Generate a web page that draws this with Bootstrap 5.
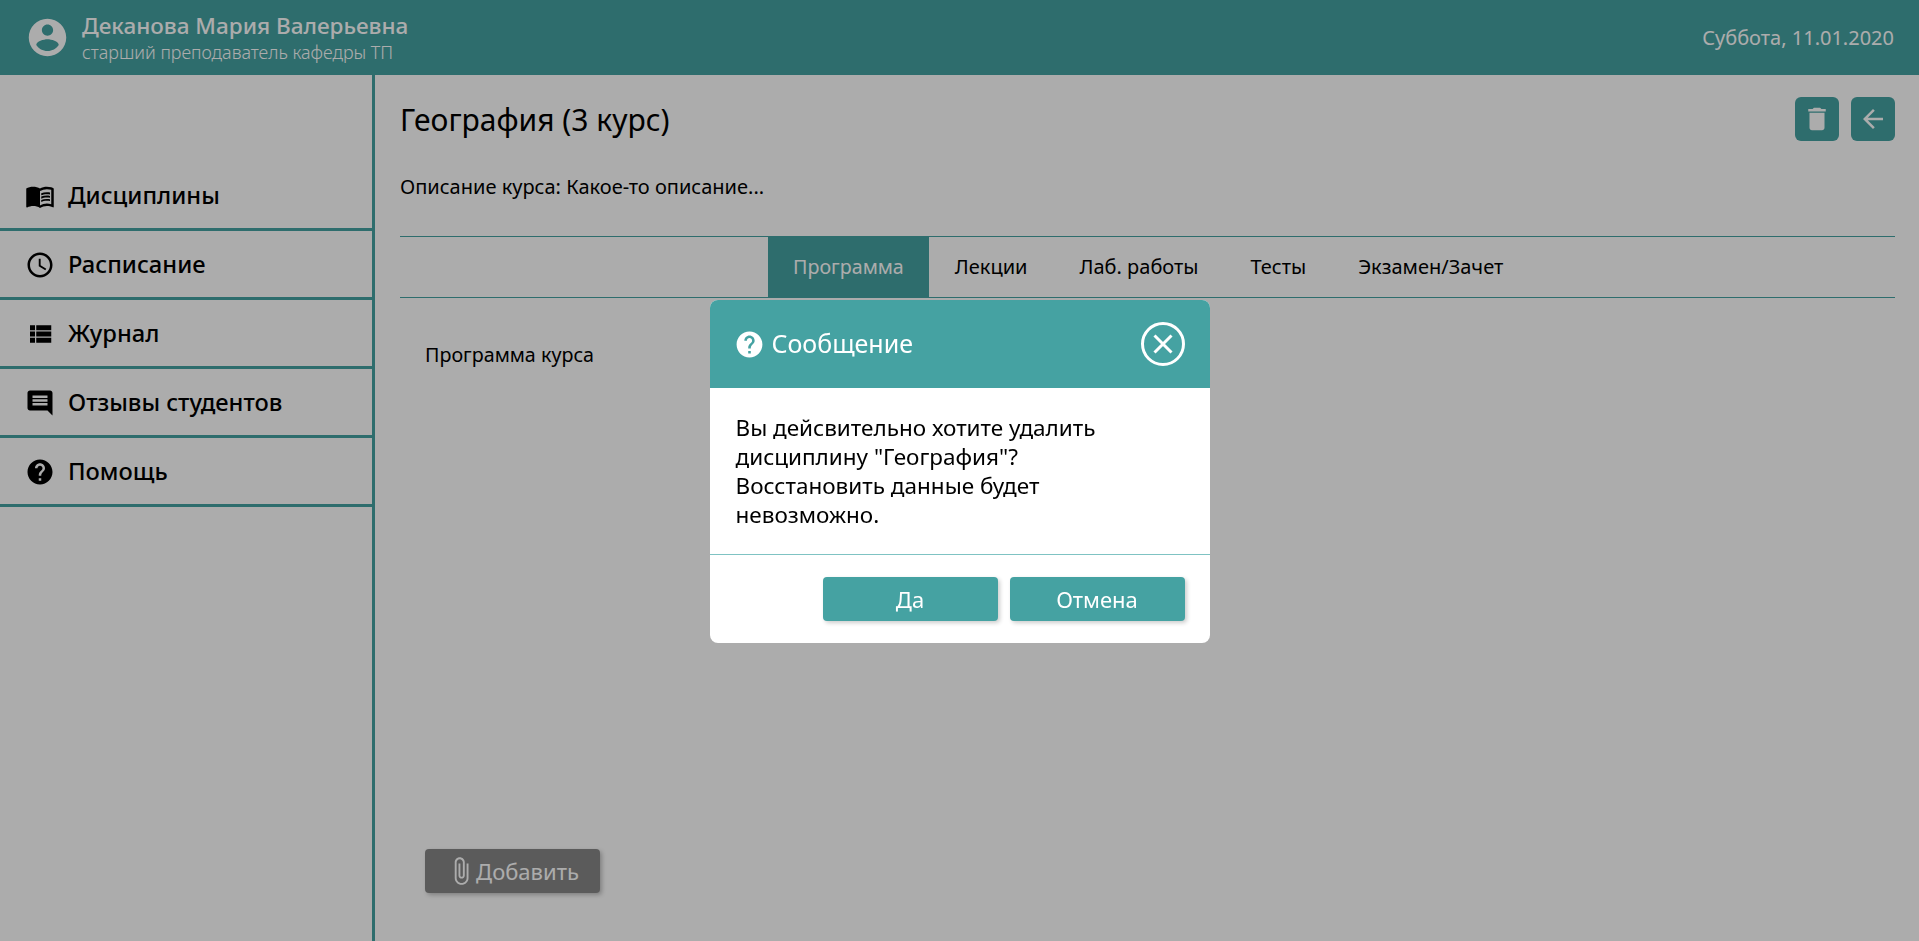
<!DOCTYPE html>
<html lang="ru">
<head>
    <meta charset="UTF-8">
    <title>География (3 курс)</title>
    <link href="https://cdn.jsdelivr.net/npm/bootstrap@5.3.0/dist/css/bootstrap.min.css" rel="stylesheet">
    <style>
        body { font-family: "Noto Sans", "Open Sans", sans-serif; color: #000; background: #fff; overflow: hidden; }
        .top-bar { height: 75px; background: #45a2a2; color: #fff; padding: 0 25px; }
        .top-bar > svg { margin-right: 12px; }
        .user-name { font-size: 22.5px; font-weight: 500; line-height: 28px; }
        .user-role { font-size: 17.9px; font-weight: 300; line-height: 24px; }
        .top-date { font-size: 20px; }
        .side-col { width: 375px; border-right: 3px solid #45a2a2; padding-top: 87px; }
        .side-link { height: 69px; border-bottom: 3px solid #45a2a2; padding: 2px 0 0 26px; color: #000; font-size: 23.7px; font-weight: 500; text-decoration: none; }
        .side-link svg { width: 30px; height: 30px; margin-left: -1px; margin-right: 13px; }
        .main-col { padding: 22px 24px 48px 25px; }
        .page-title { font-size: 30px; font-weight: 400; line-height: 42px; padding-top: 2px; margin: 0; }
        .square-btn { width: 44px; height: 44px; background: #45a2a2; border-radius: 6px; border: 0; padding: 0; color: #fff; }
        .square-btn svg { width: 30px; height: 30px; }
        .btn-pair { gap: 12px; }
        .descr { font-size: 20px; margin: 33px 0 0; line-height: 26px; height: 62px; }
        .tab-row { height: 62px; border-top: 1px solid #45a2a2; border-bottom: 1px solid #45a2a2; padding-left: 368px; }
        .tab-row a { height: 60px; padding: 0 26px; color: #000; font-size: 20px; text-decoration: none; }
        .tab-row a.now { background: #45a2a2; color: #fff; padding: 0 25px; font-size: 19.7px; }
        .tab-text { font-size: 19.7px; margin: 44px 0 0 25px; line-height: 26px; }
        .add-btn { width: 175px; height: 44px; background: #888; color: #fff; font-size: 22px; border: 0; border-radius: 4px; box-shadow: 2px 2px 4px rgba(0,0,0,.25); margin-left: 25px; }
        .add-btn svg { width: 30px; height: 30px; }
        .shade { position: fixed; inset: 0; background: rgba(0,0,0,.325); z-index: 1040; }
        .msg-dialog { margin-top: 29px; }
        .msg-box { border: 0; border-radius: 8px; overflow: hidden; }
        .msg-head { height: 88px; background: #45a2a2; color: #fff; border: 0; border-radius: 0; padding: 0 25px 0 24px; }
        .msg-title { font-size: 25px; font-weight: 400; }
        .msg-title svg { width: 31px; height: 31px; margin-right: 7px; }
        .msg-close { width: 44px; height: 44px; border: 3px solid #fff; border-radius: 50%; background: none; padding: 0; }
        .msg-close svg { width: 22px; height: 22px; }
        .msg-body { flex: none; padding: 25px 90px 0 26px; height: 167px; font-size: 22.5px; line-height: 29px; border-bottom: 1px solid #7fc3c3; }
        .msg-foot { height: 88px; padding: 22px 25px 0 0; border: 0; gap: 12px; }
        .msg-btn { width: 175px; height: 44px; background: #45a2a2; color: #fff; font-size: 22px; border: 0; border-radius: 4px; box-shadow: 2px 2px 4px rgba(0,0,0,.2); padding: 0; margin: 0; }
    </style>
</head>
<body>
<div class="d-flex flex-column vh-100">
    <div class="top-bar d-flex align-items-center">
        <svg width="45" height="45" viewBox="0 0 24 24" fill="currentColor" class="flex-shrink-0"><path d="M12 2C6.48 2 2 6.48 2 12s4.48 10 10 10 10-4.48 10-10S17.52 2 12 2zm0 3c1.66 0 3 1.34 3 3s-1.34 3-3 3-3-1.34-3-3 1.34-3 3-3zm0 14.2c-2.5 0-4.71-1.28-6-3.22.03-1.99 4-3.08 6-3.08 1.99 0 5.97 1.09 6 3.08-1.29 1.94-3.5 3.22-6 3.22z"/></svg>
        <div class="flex-grow-1">
            <div class="user-name">Деканова Мария Валерьевна</div>
            <div class="user-role">старший преподаватель кафедры ТП</div>
        </div>
        <div class="top-date">Суббота, 11.01.2020</div>
    </div>
    <div class="d-flex flex-grow-1">
        <nav class="side-col flex-shrink-0">
            <a href="#" class="side-link d-flex align-items-center">
                <svg viewBox="0 0 24 24" fill="currentColor"><path d="M21 5c-1.11-.35-2.33-.5-3.5-.5-1.95 0-4.05.4-5.5 1.5-1.45-1.1-3.55-1.5-5.5-1.5S2.45 4.9 1 6v14.65c0 .25.25.5.5.5.1 0 .15-.05.25-.05C3.1 20.45 5.05 20 6.5 20c1.95 0 4.05.4 5.5 1.5 1.35-.85 3.8-1.5 5.5-1.5 1.65 0 3.35.3 4.75 1.05.1.05.15.05.25.05.25 0 .5-.25.5-.5V6c-.6-.45-1.25-.75-2-1zm0 13.5c-1.1-.35-2.3-.5-3.5-.5-1.7 0-4.15.65-5.5 1.5V8c1.35-.85 3.8-1.5 5.5-1.5 1.2 0 2.4.15 3.5.5v11.5z"/><path d="M17.5 10.5c.88 0 1.73.09 2.5.26V9.24c-.79-.15-1.64-.24-2.5-.24-1.7 0-3.24.29-4.5.83v1.66c1.13-.64 2.7-.99 4.5-.99zM13 12.49v1.66c1.13-.64 2.7-.99 4.5-.99.88 0 1.73.09 2.5.26V11.9c-.79-.15-1.64-.24-2.5-.24-1.7 0-3.24.3-4.5.83zM17.5 14.33c-1.7 0-3.24.29-4.5.83v1.66c1.13-.64 2.7-.99 4.5-.99.88 0 1.73.09 2.5.26v-1.52c-.79-.16-1.64-.24-2.5-.24z"/></svg>
                Дисциплины
            </a>
            <a href="#" class="side-link d-flex align-items-center">
                <svg viewBox="0 0 24 24" fill="currentColor"><path d="M11.99 2C6.47 2 2 6.48 2 12s4.47 10 9.99 10C17.52 22 22 17.52 22 12S17.52 2 11.99 2zM12 20c-4.42 0-8-3.58-8-8s3.58-8 8-8 8 3.58 8 8-3.58 8-8 8zm.5-13H11v6l5.25 3.15.75-1.23-4.5-2.67z"/></svg>
                Расписание
            </a>
            <a href="#" class="side-link d-flex align-items-center">
                <svg viewBox="0 0 24 24" fill="currentColor"><path d="M4 5h4v4H4zM9 5h12v4H9zM4 10h4v4H4zM9 10h12v4H9zM4 15h4v4H4zM9 15h12v4H9z"/></svg>
                Журнал
            </a>
            <a href="#" class="side-link d-flex align-items-center">
                <svg viewBox="0 0 24 24" fill="currentColor"><path d="M21.99 4c0-1.1-.89-2-1.99-2H4c-1.1 0-2 .9-2 2v12c0 1.1.9 2 2 2h14l4 4-.01-18zM18 14H6v-2h12v2zm0-3H6V9h12v2zm0-3H6V6h12v2z"/></svg>
                Отзывы студентов
            </a>
            <a href="#" class="side-link d-flex align-items-center">
                <svg viewBox="0 0 24 24" fill="currentColor"><path d="M12 2C6.48 2 2 6.48 2 12s4.48 10 10 10 10-4.48 10-10S17.52 2 12 2zm1 17h-2v-2h2v2zm2.07-7.75l-.9.92C13.45 12.9 13 13.5 13 15h-2v-.5c0-1.1.45-2.1 1.17-2.83l1.24-1.26c.37-.36.59-.86.59-1.41 0-1.1-.9-2-2-2s-2 .9-2 2H8c0-2.21 1.79-4 4-4s4 1.79 4 4c0 .88-.36 1.68-.93 2.25z"/></svg>
                Помощь
            </a>
        </nav>
        <main class="main-col flex-grow-1 d-flex flex-column">
            <div class="d-flex align-items-center justify-content-between">
                <h1 class="page-title">География (3 курс)</h1>
                <div class="d-flex btn-pair">
                    <button class="square-btn d-flex align-items-center justify-content-center" type="button">
                        <svg viewBox="0 0 24 24" fill="currentColor"><path d="M6 19c0 1.1.9 2 2 2h8c1.1 0 2-.9 2-2V7H6v12zM19 4h-3.5l-1-1h-5l-1 1H5v2h14V4z"/></svg>
                    </button>
                    <button class="square-btn d-flex align-items-center justify-content-center" type="button">
                        <svg viewBox="0 0 24 24" fill="currentColor"><path d="M20 11H7.83l5.59-5.59L12 4l-8 8 8 8 1.41-1.41L7.83 13H20v-2z"/></svg>
                    </button>
                </div>
            </div>
            <p class="descr">Описание курса: Какое-то описание...</p>
            <div class="tab-row d-flex">
                <a href="#" class="now d-flex align-items-center">Программа</a>
                <a href="#" class="d-flex align-items-center">Лекции</a>
                <a href="#" class="d-flex align-items-center">Лаб. работы</a>
                <a href="#" class="d-flex align-items-center">Тесты</a>
                <a href="#" class="d-flex align-items-center">Экзамен/Зачет</a>
            </div>
            <p class="tab-text">Программа курса</p>
            <div class="mt-auto">
                <button class="add-btn d-flex align-items-center justify-content-center" type="button">
                    <svg viewBox="0 0 24 24" fill="currentColor"><path d="M16.5 6v11.5c0 2.21-1.79 4-4 4s-4-1.79-4-4V5c0-1.38 1.12-2.5 2.5-2.5s2.5 1.12 2.5 2.5v10.5c0 .55-.45 1-1 1s-1-.45-1-1V6H10v9.5c0 1.38 1.12 2.5 2.5 2.5s2.5-1.12 2.5-2.5V5c0-2.21-1.79-4-4-4S7 2.79 7 5v12.5c0 3.04 2.46 5.5 5.5 5.5s5.5-2.46 5.5-5.5V6h-1.5z"/></svg>
                    Добавить
                </button>
            </div>
        </main>
    </div>
</div>

<div class="shade"></div>
<div class="modal d-block" tabindex="-1">
    <div class="modal-dialog modal-dialog-centered msg-dialog">
        <div class="modal-content msg-box">
            <div class="modal-header msg-head">
                <div class="msg-title d-flex align-items-center">
                    <svg viewBox="0 0 24 24" fill="currentColor"><path d="M12 2C6.48 2 2 6.48 2 12s4.48 10 10 10 10-4.48 10-10S17.52 2 12 2zm1 17h-2v-2h2v2zm2.07-7.75l-.9.92C13.45 12.9 13 13.5 13 15h-2v-.5c0-1.1.45-2.1 1.17-2.83l1.24-1.26c.37-.36.59-.86.59-1.41 0-1.1-.9-2-2-2s-2 .9-2 2H8c0-2.21 1.79-4 4-4s4 1.79 4 4c0 .88-.36 1.68-.93 2.25z"/></svg>
                    Сообщение
                </div>
                <button class="msg-close d-flex align-items-center justify-content-center ms-auto" type="button">
                    <svg viewBox="0 0 22 22" fill="none" stroke="#fff" stroke-width="3"><path d="M2.5 2.5l17 17M19.5 2.5l-17 17"/></svg>
                </button>
            </div>
            <div class="modal-body msg-body">Вы дейсвительно хотите удалить дисциплину "География"? Восстановить данные будет невозможно.</div>
            <div class="modal-footer msg-foot d-flex justify-content-end align-items-start">
                <button class="msg-btn" type="button">Да</button>
                <button class="msg-btn" type="button">Отмена</button>
            </div>
        </div>
    </div>
</div>
<script src="https://cdn.jsdelivr.net/npm/bootstrap@5.3.0/dist/js/bootstrap.bundle.min.js"></script>
</body>
</html>
